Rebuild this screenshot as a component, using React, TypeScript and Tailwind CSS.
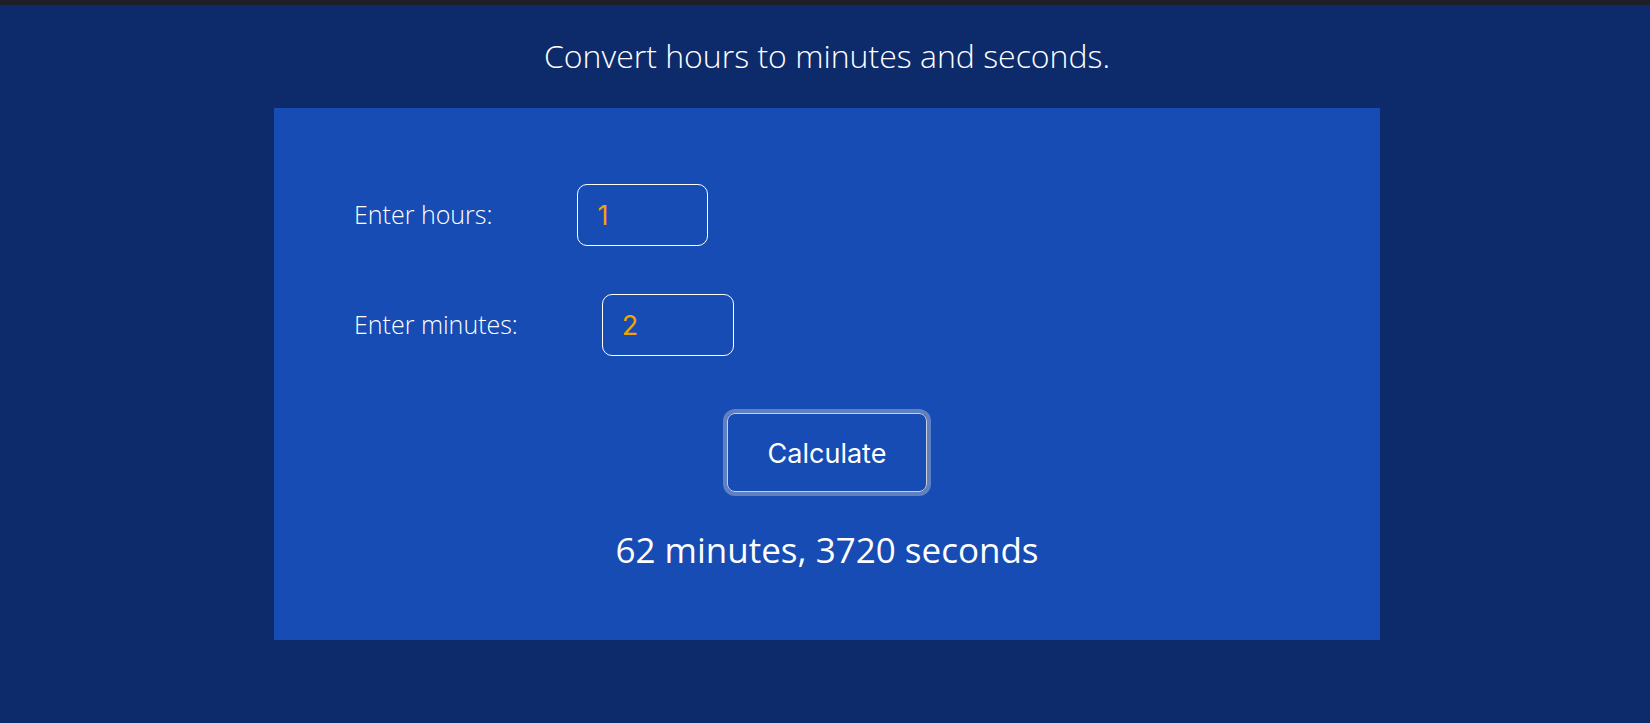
import { useState } from "react";

// hours + minutes -> total minutes / seconds
export default function App() {
  const [hours, setHours] = useState("1");
  const [minutes, setMinutes] = useState("2");
  const [result, setResult] = useState(() => calc("1", "2"));

  function calc(h: string, m: string) {
    const total = (parseFloat(h) || 0) * 60 + (parseFloat(m) || 0);
    return `${total} minutes, ${total * 60} seconds`;
  }

  return (
    <div className="min-h-screen bg-[#0d2b6b] border-t-[5px] border-[#1e1f27] font-['Open_Sans',sans-serif] text-white">
      <h1 className="pt-[29px] pb-[30px] pl-1 text-center text-[32px] leading-[44px] font-light">
        Convert hours to minutes and seconds.
      </h1>

      <div className="flex justify-center pl-1">
        <section className="w-[1106px] bg-[#164cb4] pt-[76px] pb-[66px]">
          {/* Inputs */}
          <div className="flex flex-col gap-12 pl-[80px]">
            <label className="flex items-center">
              <span className="text-[25px] font-light">Enter hours:</span>
              <input
                value={hours}
                onChange={(e) => setHours(e.target.value)}
                className="ml-[85px] w-[131px] h-[62px] rounded-[10px] border border-white bg-transparent pl-[19px] text-[27px] text-[#f5a100] font-['Inter',sans-serif] outline-none"
              />
            </label>
            <label className="flex items-center">
              <span className="text-[25px] font-light">Enter minutes:</span>
              <input
                value={minutes}
                onChange={(e) => setMinutes(e.target.value)}
                className="ml-[84px] w-[132px] h-[62px] rounded-[10px] border border-white bg-transparent pl-[19px] text-[27px] text-[#f5a100] font-['Inter',sans-serif] outline-none"
              />
            </label>
          </div>

          {/* Button */}
          <div className="flex justify-center mt-[57px]">
            <button
              onClick={() => setResult(calc(hours, minutes))}
              className="w-[200px] h-[79px] pt-1 rounded-[8px] border border-[#c9cfdc] text-[27px] font-['Inter',sans-serif] text-white shadow-[0_0_0_4px_rgba(170,180,205,0.5)]"
            >
              Calculate
            </button>
          </div>

          {/* Result */}
          <p className="mt-[34px] text-center text-[35px] leading-[48px]">{result}</p>
        </section>
      </div>
    </div>
  );
}
